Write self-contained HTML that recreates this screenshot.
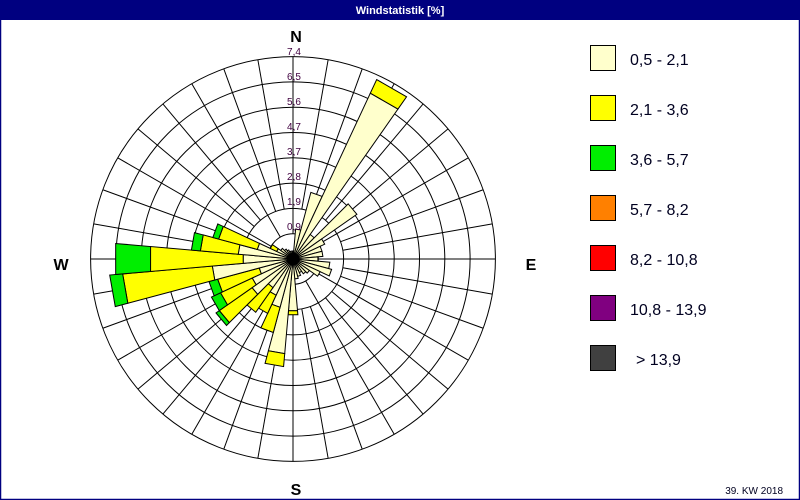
<!DOCTYPE html>
<html><head><meta charset="utf-8"><style>
html,body{margin:0;padding:0;background:#fff}
#w{position:relative;width:800px;height:500px;overflow:hidden;font-family:"Liberation Sans",sans-serif}
</style></head><body><div id="w">
<svg id="s" width="800" height="500" viewBox="0 0 800 500" xmlns="http://www.w3.org/2000/svg">
<rect x="0" y="0" width="800" height="500" fill="#fff"/>
<rect x="0" y="0" width="800" height="20" fill="#000080"/>
<rect x="0.5" y="0.5" width="799" height="499" fill="none" stroke="#000080" stroke-width="1.5"/>
<text x="400" y="14" fill="#fff" font-size="11" font-weight="bold" text-anchor="middle">Windstatistik [%]</text>
<g id="grid" stroke="#000" stroke-width="1" fill="none"></g>
<g id="pet" stroke="#000" stroke-width="1"></g>
<circle cx="293" cy="259" r="6" fill="#000"/>
<g font-size="10" fill="#400040" text-anchor="middle">
<text x="294" y="55">7,4</text><text x="294" y="80">6,5</text><text x="294" y="105">5,6</text><text x="294" y="130">4,7</text><text x="294" y="155">3,7</text><text x="294" y="180">2,8</text><text x="294" y="205">1,9</text><text x="294" y="230">0,9</text>
</g>
<g font-size="16" font-weight="bold" fill="#000" text-anchor="middle">
<text x="296" y="42">N</text><text x="61" y="270">W</text><text x="531" y="270">E</text><text x="296" y="495">S</text>
</g>
<g stroke="#000" stroke-width="1">
<rect x="590.5" y="45.5" width="25" height="25" fill="#ffffcc"/>
<rect x="590.5" y="95.5" width="25" height="25" fill="#ffff00"/>
<rect x="590.5" y="145.5" width="25" height="25" fill="#00ee00"/>
<rect x="590.5" y="195.5" width="25" height="25" fill="#ff8000"/>
<rect x="590.5" y="245.5" width="25" height="25" fill="#ff0000"/>
<rect x="590.5" y="295.5" width="25" height="25" fill="#800080"/>
<rect x="590.5" y="345.5" width="25" height="25" fill="#404040"/>
</g>
<g font-size="16" fill="#000020">
<text x="630" y="65">0,5 - 2,1</text>
<text x="630" y="115">2,1 - 3,6</text>
<text x="630" y="165">3,6 - 5,7</text>
<text x="630" y="215">5,7 - 8,2</text>
<text x="630" y="265">8,2 - 10,8</text>
<text x="630" y="315">10,8 - 13,9</text>
<text x="636" y="365">&gt; 13,9</text>
</g>
<text x="783" y="494" font-size="10" fill="#000020" text-anchor="end">39. KW 2018</text>
</svg>
<script>
var cx=293,cy=259,S=25.3;
function P(a,r){var t=a*Math.PI/180;return [cx+r*Math.sin(t),cy-r*Math.cos(t)];}
var g=document.getElementById('grid'),h='';
for(var k=1;k<=8;k++){h+='<circle cx="'+cx+'" cy="'+cy+'" r="'+(k*S)+'"/>';}
for(var a=0;a<360;a+=10){var r0=(a%30==0)?S:2*S;var p=P(a,r0),q=P(a,8*S);
h+='<line x1="'+p[0]+'" y1="'+p[1]+'" x2="'+q[0]+'" y2="'+q[1]+'"/>';}
g.innerHTML=h;
var d=[[0,8],[10,30],[20,69],[30,183,198],[40,30],[50,78],[60,35],[70,30],[80,30],[90,25],[100,37],[110,40],[120,30],[130,20],[140,18],[150,15],[160,18],[170,20],
[180,52,56],[190,95,108],[200,50,76],[210,40,60],[220,35,65],[230,50,90,94],[240,45,80,90],[250,35,78,87],[260,81,171,184],[270,50,143,178],[280,55,93,102],[290,37,77,83],[300,18,25],[310,15],[320,12],[330,10],[340,8],[350,8]];
var cols=['#ffffcc','#ffff00','#00ee00'],ph='';
function sec(a,r1,r2,c){var A=P(a-5,r1),B=P(a+5,r1),C=P(a+5,r2),D=P(a-5,r2);
return '<path fill="'+c+'" d="M'+A+' L'+D+' L'+C+' L'+B+' Z"/>';}
d.forEach(function(e){var prev=0;for(var i=1;i<e.length;i++){ph+=sec(e[0],prev,e[i],cols[i-1]);prev=e[i];}});
document.getElementById('pet').innerHTML=ph;
</script>
</div></body></html>
